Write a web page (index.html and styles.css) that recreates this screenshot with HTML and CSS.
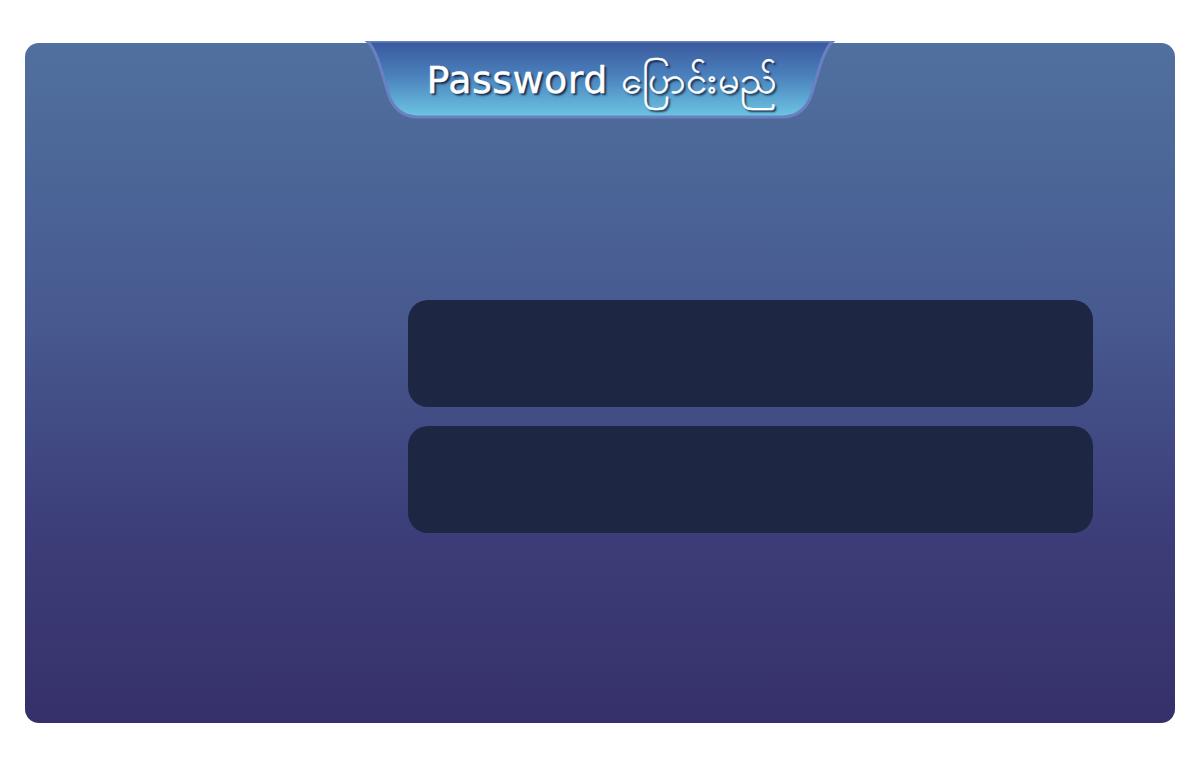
FILE: index.html
```html
<!DOCTYPE html>
<html>
<head>
<meta charset="utf-8">
<link rel="stylesheet" href="styles.css">
</head>
<body>
<div class="panel">
  <div class="tab">
    <svg class="tab-shape" width="472" height="80" viewBox="0 0 472 80">
      <defs>
        <linearGradient id="tg" x1="0" y1="0" x2="0" y2="1">
          <stop offset="0" stop-color="#3a589d"/>
          <stop offset="0.45" stop-color="#4a80bb"/>
          <stop offset="1" stop-color="#6cc6e4"/>
        </linearGradient>
      </defs>
      <path d="M3,0 C11,6 17,27 24,52 Q31,75 53,76 L419,76 Q441,75 448,52 C455,27 461,6 469,0 Z" fill="url(#tg)" stroke="#6a80c2" stroke-width="3"/>
    </svg>
    <h1 class="title">Password ပြောင်းမည်</h1>
  </div>
  <div class="fields">
    <div class="field"></div>
    <div class="field"></div>
  </div>
</div>
</body>
</html>
```
FILE: styles.css
```css
html, body {
  margin: 0;
  padding: 0;
  background: #ffffff;
}
body {
  padding: 43px 25px 0 25px;
  font-family: "DejaVu Sans", "Noto Sans", sans-serif;
}
.panel {
  position: relative;
  height: 680px;
  border-radius: 14px;
  background: linear-gradient(180deg, #50709f 0%, #475a90 40%, #3d3f7a 70%, #36306a 100%);
  padding: 257px 82px 0 383px;
  box-sizing: border-box;
}
.tab {
  position: absolute;
  left: 339px;
  top: -2px;
  width: 472px;
  height: 80px;
}
.tab-shape {
  position: absolute;
  left: 0;
  top: 0;
  display: block;
}
.title {
  position: relative;
  margin: 0;
  padding: 15px 0 0 4px;
  text-align: center;
  color: #ffffff;
  font-weight: normal;
  font-size: 38px;
  line-height: 48px;
  letter-spacing: 0.5px;
  -webkit-text-stroke: 0.4px #ffffff;
  text-shadow: 2px 2px 2px rgba(10, 20, 50, 0.85);
}
.fields {
  display: flex;
  flex-direction: column;
  gap: 19px;
}
.field {
  height: 107px;
  border-radius: 20px;
  background: #1d2744;
}
```
